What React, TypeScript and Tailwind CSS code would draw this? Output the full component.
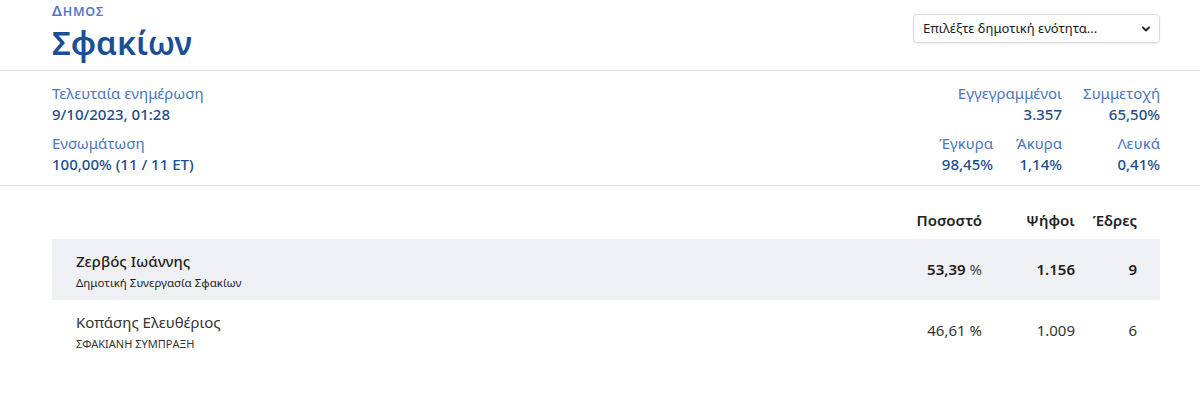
import React from "react";

const blueLabel = "text-[#4a76bd]";
const blueVal = "text-[#1c4d8c]";

export default function App() {
  return (
    <div className="w-[1200px] h-[404px] bg-white font-['Noto_Sans',sans-serif] overflow-hidden">
      {/* Header */}
      <div className="border-b border-[#e3e3e3] h-[71px]">
        <div className="pl-[52px] pr-[40px] flex justify-between items-start">
          <div className="flex flex-col">
            <div className="h-[21px] leading-[21px] font-semibold text-[#5578c8] tracking-[0.8px] whitespace-nowrap">
              <span className="text-[15px] leading-[21px]">Δ</span>
              <span className="text-[12.5px] leading-[21px]">ΗΜΟΣ</span>
            </div>
            <div className="text-[32.5px] leading-[44px] font-semibold text-[#1a4f95] whitespace-nowrap">Σφακίων</div>
          </div>
          <div className="mt-[14px] w-[247px] h-[29px] border border-[#d9dce0] rounded-[4px] shadow-[0_1px_2px_rgba(0,0,0,0.08)] flex items-center justify-between pl-[9px] pr-[8px]">
            <span className="text-[13px] text-[#1a1a1a]">Επιλέξτε δημοτική ενότητα...</span>
            <svg width="10" height="10" viewBox="0 0 10 10" className="text-[#222]">
              <path d="M2 3.5 L5 6.5 L8 3.5" fill="none" stroke="currentColor" strokeWidth="1.8" strokeLinecap="round" strokeLinejoin="round" />
            </svg>
          </div>
        </div>
      </div>

      {/* Stats */}
      <div className="border-b border-[#e3e3e3] h-[115px]">
        <div className="pl-[52px] pr-[40px] pt-[12px] flex justify-between text-[15px] leading-[21px]">
          <div className="flex flex-col gap-[8px]">
            <div>
              <div className={blueLabel}>Τελευταία ενημέρωση</div>
              <div className={`${blueVal} font-medium`}>9/10/2023, 01:28</div>
            </div>
            <div>
              <div className={blueLabel}>Ενσωμάτωση</div>
              <div className={`${blueVal} font-medium`}>100,00% (11 / 11 ΕΤ)</div>
            </div>
          </div>
          <div className="grid grid-cols-[auto_69px_98px] gap-y-[8px] text-right">
            <div className="col-span-2">
              <div className={blueLabel}>Εγγεγραμμένοι</div>
              <div className={`${blueVal} font-medium`}>3.357</div>
            </div>
            <div>
              <div className={blueLabel}>Συμμετοχή</div>
              <div className={`${blueVal} font-medium`}>65,50%</div>
            </div>
            <div>
              <div className={blueLabel}>Έγκυρα</div>
              <div className={`${blueVal} font-medium`}>98,45%</div>
            </div>
            <div>
              <div className={blueLabel}>Άκυρα</div>
              <div className={`${blueVal} font-medium`}>1,14%</div>
            </div>
            <div>
              <div className={blueLabel}>Λευκά</div>
              <div className={`${blueVal} font-medium`}>0,41%</div>
            </div>
          </div>
        </div>
      </div>

      {/* Table */}
      <div className="pl-[52px] pr-[40px] pt-[17px]">
        <div className="flex items-start h-[36px] pt-[7px] text-[15px] leading-[20px] font-semibold text-[#222] pr-[23px]">
          <div className="flex-1" />
          <div className="w-[120px] text-right">Ποσοστό</div>
          <div className="w-[93px] text-right">Ψήφοι</div>
          <div className="w-[62px] text-right">Έδρες</div>
        </div>
        <div className="flex items-center h-[61px] bg-[#eff0f3] pl-[24px] pr-[23px]">
          <div className="flex-1 flex flex-col pt-[3px]">
            <div className="text-[15px] leading-[20px] font-medium text-[#1e1e1e]">Ζερβός Ιωάννης</div>
            <div className="text-[11.5px] leading-[18px] text-[#1e1e1e] mt-[3px]">Δημοτική Συνεργασία Σφακίων</div>
          </div>
          <div className="w-[120px] text-right text-[15px] text-[#1e1e1e]">
            <span className="font-semibold">53,39</span> <span className="text-[#444]">%</span>
          </div>
          <div className="w-[93px] text-right text-[15px] font-semibold text-[#1e1e1e]">1.156</div>
          <div className="w-[62px] text-right text-[15px] font-semibold text-[#1e1e1e]">9</div>
        </div>
        <div className="flex items-center h-[61px] pl-[24px] pr-[23px]">
          <div className="flex-1 flex flex-col pt-[3px]">
            <div className="text-[15px] leading-[20px] text-[#333]">Κοπάσης Ελευθέριος</div>
            <div className="text-[11px] leading-[18px] text-[#333] mt-[3px]">ΣΦΑΚΙΑΝΗ ΣΥΜΠΡΑΞΗ</div>
          </div>
          <div className="w-[120px] text-right text-[15px] text-[#333]">46,61 %</div>
          <div className="w-[93px] text-right text-[15px] text-[#333]">1.009</div>
          <div className="w-[62px] text-right text-[15px] text-[#333]">6</div>
        </div>
      </div>
    </div>
  );
}
